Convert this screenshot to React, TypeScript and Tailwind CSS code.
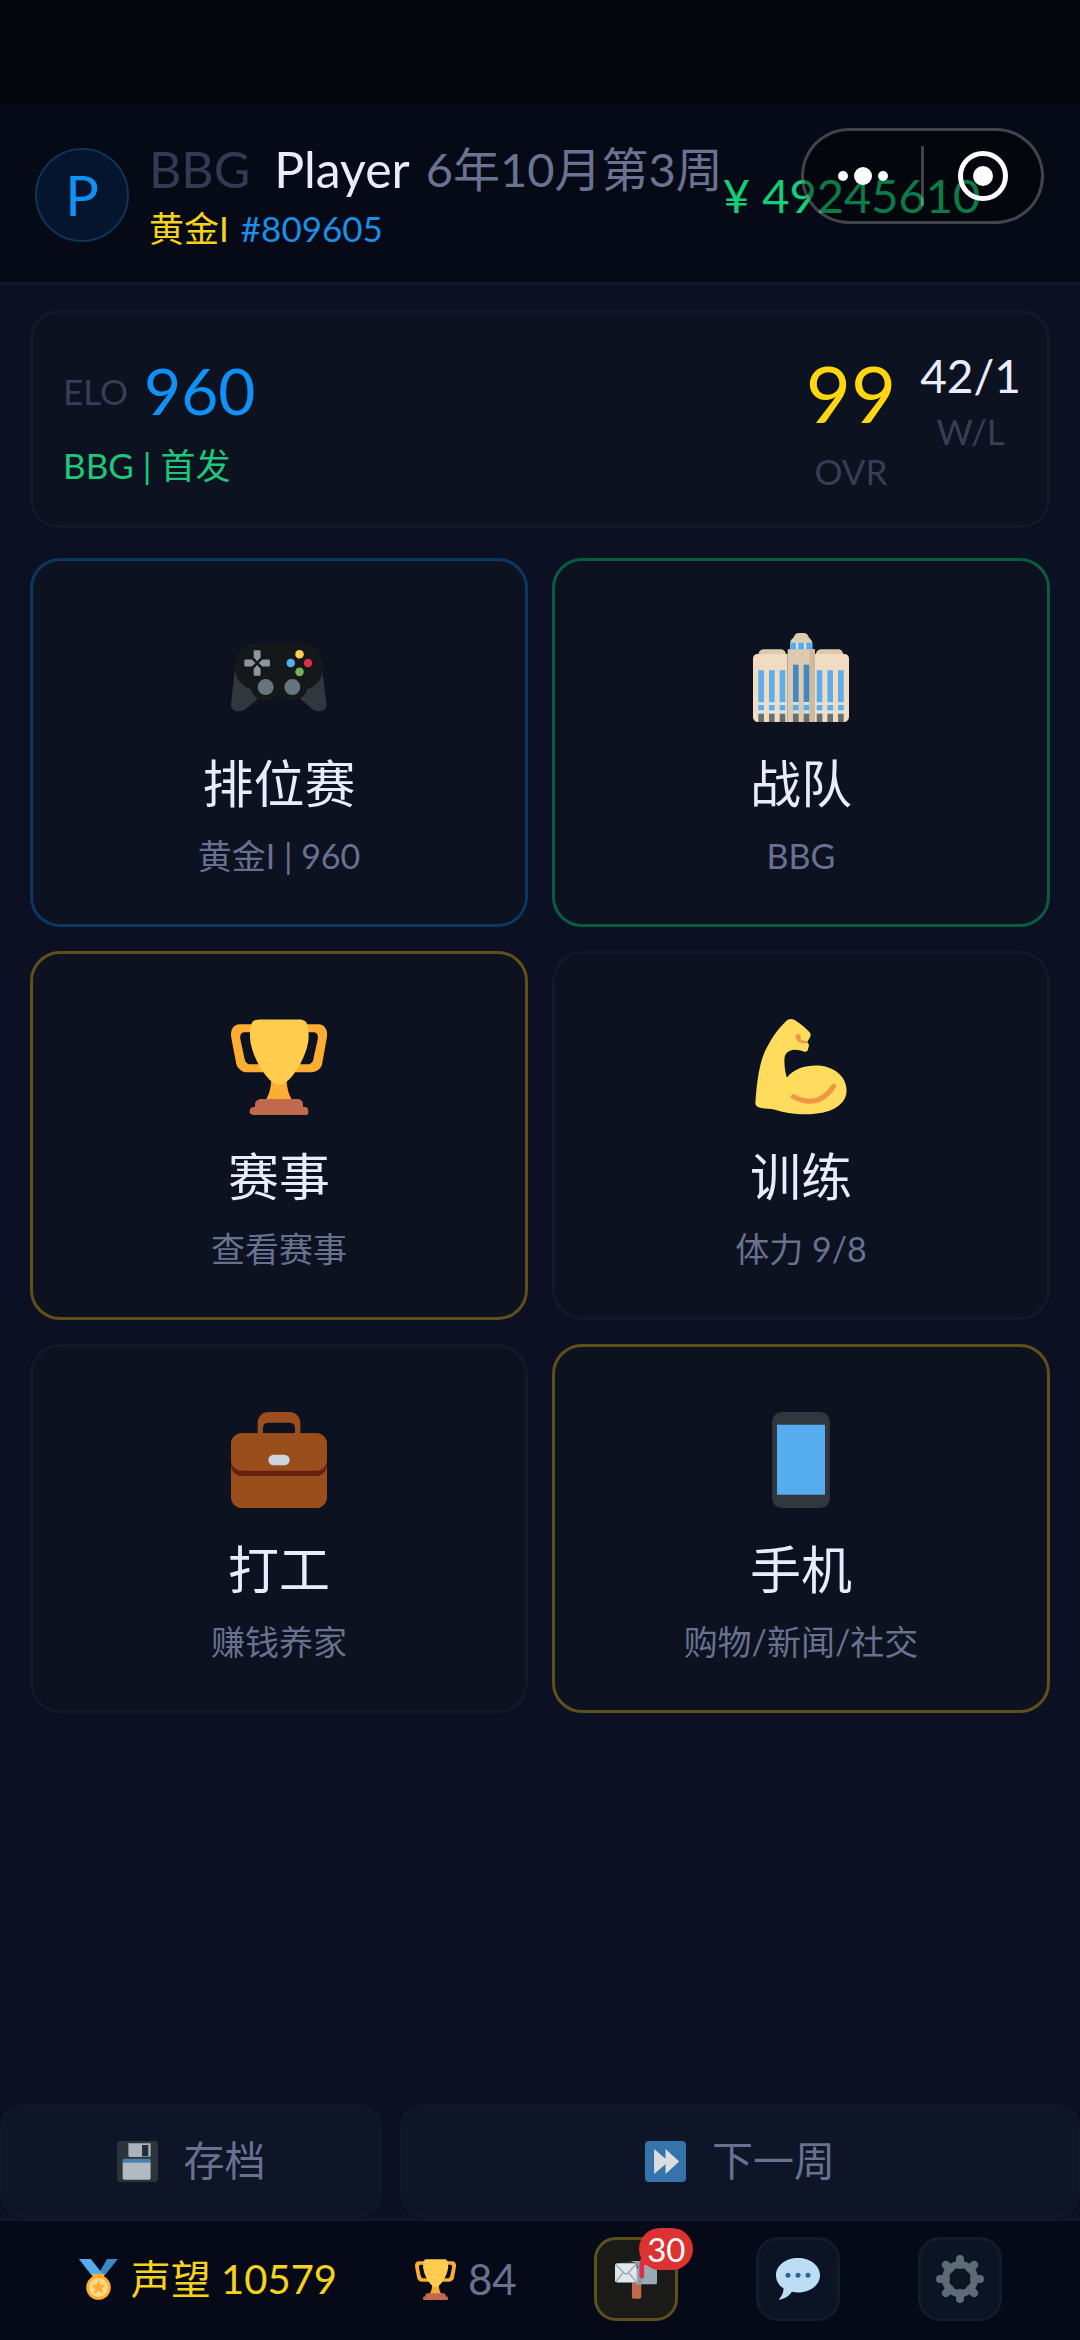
import type { ReactNode } from "react";

const Gamepad = () => (
  <svg viewBox="0 0 36 36" className="w-24 h-24" aria-hidden="true">
    <path
      fill="#31373D"
      d="M1.6 15 0 29.3C-.1 31.2 1.400 32 2.900 32c1 0 1.900-.3 2.600-.9L14 24zM34 15l1.800 14.300c.2 1.900-1.300 2.700-2.700 2.700-1 0-1.900-.3-2.600-.9L22 24z"
    />
    <path
      fill="#141819"
      d="M8.500 6.500h19c4 0 7 4 7 9 0 4.300-2.500 7.200-6 8.200C28 26.300 25.600 28 23 28c-1.800 0-3-.6-4-1.500h-2c-1 .9-2.200 1.500-4 1.500-2.600 0-5-1.700-5.500-4.300-3.500-1-6-3.900-6-8.200 0-5 3-9 7-9z"
    />
    <circle cx="13" cy="22.900" r="3" fill="#66757F" />
    <circle cx="23" cy="22.900" r="3" fill="#66757F" />
    <path
      fill="#8A96A0"
      d="M8.500 9.600c0-.3.200-.5.500-.5h1.600c.3 0 .5.200.5.500v2.200L9.800 13.200 8.500 11.800zM8.500 18.200c0 .3.200.5.500.5h1.600c.3 0 .5-.2.500-.5V16l-1.300-1.400L8.500 16zM5.500 12.600c-.3 0-.5.200-.5.500v1.600c0 .3.200.5.500.5h2.300l1.400-1.300-1.400-1.300zM14.100 12.600c.3 0 .5.200.5.500v1.600c0 .3-.2.500-.5.500h-2.300l-1.400-1.300 1.400-1.300z"
    />
    <circle cx="25.700" cy="10.600" r="1.600" fill="#FFCC4D" />
    <circle cx="22.400" cy="13.900" r="1.600" fill="#55ACEE" />
    <circle cx="28.900" cy="13.900" r="1.600" fill="#DD2E44" />
    <circle cx="25.700" cy="17.200" r="1.600" fill="#77B255" />
  </svg>
);

const sideWindows = [2, 6, 10, 23.9, 27.9, 31.9];
const towerWindows = [15, 19];

const Building = () => (
  <svg viewBox="0 0 36 36" className="w-24 h-24" aria-hidden="true">
    <path fill="#DDC9AC" d="M2 11c0-1.500 1-2.300 2-2.300h6.500c1 0 1.800.8 2 2.300zM23.500 11c0-1.500 1-2.300 2-2.300H32c1 0 1.800.8 2 2.300z" />
    <path
      fill="#EFDCC2"
      d="M0 12.200c0-1 .7-1.700 1.700-1.700H13V36H2c-1.200 0-2-.8-2-2zM36 12.200c0-1-.7-1.700-1.700-1.700H23V36h11c1.200 0 2-.8 2-2z"
    />
    <path fill="#DFCDB3" d="M14 6.300c0-1.300.8-1.400 1.300-2.200.4-1 .9-1.500 1.900-1.500h1.800c1 0 1.500.5 1.900 1.500.4.800 1.300 1 1.300 2.200v2.600H14z" />
    <path fill="#DDCAAF" d="M13 8.700h10.200V36H13z" />
    <path fill="#CDBA9F" d="M21.200 8.700h2V36h-2z" />
    <path fill="#D5E4EC" d="M14 6.300h8.200v2.400H14z" />
    <path fill="#55ACEE" d="M14 6.300h2.100v2.400H14zM17 6.300h2.100v2.400H17zM20 6.300h2.200v2.400H20z" />
    {sideWindows.map((x) => (
      <g key={x}>
        <path fill="#D3E6EF" d={`M${x} 28.500h2.100v4.200H${x}z`} />
        <path fill="#5DADEC" d={`M${x} 16.600h2.100v12H${x}zM${x} 29.600h2.100v2H${x}z`} />
        <path fill="#66706F" d={`M${x} 32.900h2.100V36H${x}z`} />
      </g>
    ))}
    {towerWindows.map((x) => (
      <g key={x}>
        <path fill="#D3E0E4" d={`M${x} 28.500h2.100v4.200H${x}z`} />
        <path fill="#4289C1" d={`M${x} 14.500h2.100v14H${x}z`} />
        <path fill="#55ACEE" d={`M${x} 29.600h2.100v2H${x}z`} />
        <path fill="#66706F" d={`M${x} 32.900h2.100V36H${x}z`} />
      </g>
    ))}
  </svg>
);

const Trophy = ({ className }: { className: string }) => (
  <svg viewBox="0 0 36 36" className={className} aria-hidden="true">
    <path
      fill="#FFAC33"
      d="M5.123 5h6C12.227 5 13 4.896 13 6V4c0-1.104-.773-2-1.877-2h-8c-2 0-3.583 2.125-3 5 0 0 1.791 9.375 1.917 9.958C2.373 18.500 4.164 20 6.081 20h6.958c1.105 0-.039-1.896-.039-3v-2c0 1.104-.773 2-1.877 2h-4c-1.104 0-1.833-1.042-2-2S3.539 7.667 3.539 7.667C3.206 5.750 4.018 5 5.123 5zm25.812 0h-6C23.831 5 22 4.896 22 6V4c0-1.104 1.831-2 2.935-2h8c2 0 3.584 2.125 3 5 0 0-1.633 9.419-1.771 10-.354 1.500-2.042 3-4 3h-7.146C21.914 20 22 18.104 22 17v-2c0 1.104 1.831 2 2.935 2h4c1.104 0 1.834-1.042 2-2s1.584-7.333 1.584-7.333C32.851 5.750 32.040 5 30.935 5zM20.832 22c0-6.958-2.709 0-2.709 0s-3-6.958-3 0-3.291 10-3.291 10h12.292c-.001 0-3.292-3.042-3.292-10z"
    />
    <path
      fill="#FFCC4D"
      d="M29.123 6.577c0 6.775-6.770 18.192-11 18.192-4.231 0-11-11.417-11-18.192 0-5.195 1-6.319 3-6.319 1.374 0 6.025-.027 8-.027l7-.001c2.917-.001 4 .684 4 6.347z"
    />
    <path
      fill="#C1694F"
      d="M27 33c0 1.104.227 2-.877 2h-16C9.018 35 9 34.104 9 33v-1c0-1.104 1.164-2 2.206-2h13.917c1.042 0 1.877.896 1.877 2v1z"
    />
    <path
      fill="#C1694F"
      d="M29 34.625c0 .76.165 1.375-1.252 1.375H8.498C7.206 36 7 35.385 7 34.625v-.25C7 33.615 7.738 33 8.498 33h19.250c.759 0 1.252.615 1.252 1.375v.25z"
    />
  </svg>
);

const Muscle = () => (
  <svg viewBox="0 0 36 36" className="w-24 h-24" aria-hidden="true">
    <path
      fill="#FFDC5D"
      d="M13.700.1c.8-.2 1.700.1 2.600.7 1.900 1.200 3.600 2.700 5 4.300.4.500.4 1.100.1 1.700l-1.100 1.900c.6.400.8.900.6 1.600l-.3 1.200c-.3.700-.9.900-1.600.7-1.500-.5-3-.9-4.500-.5-1.700.4-2.600 1.500-2.700 3.300-.1 2.300.2 4.700.9 6.900 2.700-3.200 6.500-4.500 11-4.500 6.500 0 11.400 4 11.400 9.400 0 5.600-6.200 8.900-15.100 8.900-5 0-8.900-.8-12-1.800-2-.5-4-.1-5.900-.8-.9-.4-1.300-.9-1.200-1.900C1.400 24.500 2.200 16 5.300 10.500 7.200 6.800 9.700 3.300 12.200 1c.5-.5.900-.8 1.500-.9z"
    />
    <path fill="none" stroke="#EF9645" strokeWidth="1.900" strokeLinecap="round" d="M15.200 29.100c6.400 3.500 11.400 1.500 15-3.800" />
    <path
      fill="#EF9645"
      d="M16 6.300c.2-.6.900-.8 1.400-.5.800.5.700 1 .3 1.500.3.700 1.100.8 2 .9l.7.300-.3.500c-1.600.3-3.200-.1-3.700-1.200-.2-.5-.5-.9-.4-1.500z"
    />
  </svg>
);

const Briefcase = () => (
  <svg viewBox="0 0 36 36" className="w-24 h-24" aria-hidden="true">
    <path fill="#9A4E1C" d="M10 9V4c0-2.200 1.800-4 4-4h8c2.200 0 4 1.800 4 4v5h-2V6c0-1.200-.8-2-2-2h-8c-1.200 0-2 .8-2 2v3z" />
    <rect y="8" width="36" height="28" rx="4" fill="#9A4E1C" />
    <path fill="#662113" d="M0 18v2c0 2.200 1.800 4 4 4h28c2.200 0 4-1.800 4-4v-2z" />
    <rect y="8" width="36" height="14" rx="4" fill="#9A4E1C" />
    <rect x="14" y="16" width="8" height="4" rx="2" fill="#CCD6DD" />
  </svg>
);

const Phone = () => (
  <svg viewBox="0 0 36 36" className="w-24 h-24" aria-hidden="true">
    <rect x="7.200" width="21.600" height="36" rx="3.600" fill="#31373D" />
    <path fill="#55ACEE" d="M9 4.800h18v26.200H9z" />
  </svg>
);

const Floppy = () => (
  <svg viewBox="0 0 36 36" className="w-[41px] h-[41px] opacity-90" aria-hidden="true">
    <rect width="36" height="36" rx="3" fill="#31373D" />
    <path fill="#BCC5CD" d="M10 2h19.500v10.500c0 1-.5 1.500-1.500 1.500H11.500c-1 0-1.500-.5-1.500-1.500z" />
    <path fill="#2A3038" d="M22 3.500h5.500v10H22z" />
    <path fill="#4F8CC0" d="M5 17c0-1 .6-1.500 1.500-1.500H28c1 0 1.500.5 1.500 1.500v3H5z" />
    <path fill="#C3CBD4" d="M5 19h24.500v13.500c0 1-.5 1.500-1.500 1.500H6.500c-1 0-1.500-.5-1.500-1.500z" />
  </svg>
);

const FastForward = () => (
  <svg viewBox="0 0 36 36" className="w-[41px] h-[41px]" aria-hidden="true">
    <rect width="36" height="36" rx="3.500" fill="#3474AB" />
    <path fill="#DCDEE2" d="M8 7l10 8.600V7l12 11-12 11v-8.600L8 29z" />
  </svg>
);

const Medal = () => (
  <svg viewBox="0 0 36 36" className="w-[41px] h-[41px]" aria-hidden="true">
    <path fill="#3B88C3" d="M25.500 0H35L23.500 14.500h-6.300z" />
    <path fill="#55ACEE" d="M.8 0h10.400l11 13.500-4.700 2.500h-4.300z" />
    <circle cx="18" cy="25" r="10.800" fill="#FFAC33" />
    <path fill="#FFAC33" d="M13 13h10v4H13z" />
    <circle cx="18" cy="25" r="8.300" fill="#FFD983" />
    <path fill="#FFAC33" d="M18 18.300l1.700 4.400 4.700.3-3.600 3 1.200 4.500-4-2.500-4 2.500 1.200-4.500-3.600-3 4.700-.3z" />
  </svg>
);

const Mailbox = () => (
  <svg viewBox="0 0 36 36" className="w-[42px] h-[42px]" aria-hidden="true">
    <path fill="#C1694F" d="M14.500 21h8v12.500c0 1-1 1.500-2 1.500h-4c-1 0-2-.5-2-1.500z" />
    <path fill="#99AAB5" d="M14 2.500h13c5 0 9 3 9 8v10.500c0 1-.5 1.500-1.500 1.500H18z" />
    <path fill="#292F33" d="M5 5c3-2.500 12-3 14.500 1v3H5z" />
    <path fill="#8899A6" d="M13 2.500c4 0 7 3 7 8V23h3V11c0-5-4-8.500-8-8.500z" />
    <rect y="4.500" width="18.500" height="16.500" rx="2" fill="#E1E8ED" />
    <path fill="none" stroke="#99AAB5" strokeWidth="1.200" d="M.6 5.500l7.400 7.600c.8.800 2 .8 2.800 0L18 5.500M.8 20.300l6-7.400M18 20.300l-6-7.400" />
    <path fill="#DD2E44" d="M21 3.500C21 1.500 23 0 25 0h8v6h-8v9.500c0 2.700-4 2.700-4 0z" />
  </svg>
);

const Bubble = () => (
  <svg viewBox="0 0 44 44" className="w-11 h-11" aria-hidden="true">
    <path
      fill="#BDDDF4"
      d="M22 1c12.200 0 22 7.500 22 17.200S34.200 35.500 22 35.500c-2.200 0-4.300-.2-6.200-.7C13 39.500 8 42 3.500 42.800c-.6 0-.6-.6-.2-1C6 39 7.500 35.500 7.600 31.600 3 28.400 0 23.600 0 18.200 0 8.500 9.800 1 22 1z"
    />
    <circle cx="12" cy="18.200" r="2.500" fill="#2A6797" />
    <circle cx="22" cy="18.200" r="2.500" fill="#2A6797" />
    <circle cx="32" cy="18.200" r="2.500" fill="#2A6797" />
  </svg>
);

const Gear = () => (
  <svg viewBox="0 0 48 48" className="w-12 h-12" aria-hidden="true">
    <g stroke="#5C6B76" strokeWidth="8" strokeLinecap="round">
      <path d="M24 4v6M24 38v6M4 24h6M38 24h6" />
      <path d="M9.900 9.900l4 4M34.100 34.100l4 4M9.900 38.100l4-4M34.100 13.900l4-4" />
    </g>
    <circle cx="24" cy="24" r="14.500" fill="none" stroke="#5C6B76" strokeWidth="7" />
  </svg>
);

type Tile = { title: string; note: string; border: string; icon: ReactNode };

const tiles: Tile[] = [
  { title: "排位赛", note: "黄金I | 960", border: "border-[#0b3761]", icon: <Gamepad /> },
  { title: "战队", note: "BBG", border: "border-[#0a5c40]", icon: <Building /> },
  { title: "赛事", note: "查看赛事", border: "border-[#5f501a]", icon: <Trophy className="w-24 h-24" /> },
  { title: "训练", note: "体力 9/8", border: "border-[#13192d]", icon: <Muscle /> },
  { title: "打工", note: "赚钱养家", border: "border-[#13192d]", icon: <Briefcase /> },
  { title: "手机", note: "购物/新闻/社交", border: "border-[#5f501a]", icon: <Phone /> },
];

const Header = () => (
  <header className="relative flex items-center border-b-[3px] border-[#12182b] bg-[#060a17] pl-[35px] pr-9 pt-[37px] pb-[33px]">
    <div className="flex h-[94px] w-[94px] shrink-0 items-center justify-center rounded-full border-2 border-[#0e3459] bg-[#06152e] text-[56px] leading-none text-[#0f92f7]">
      P
    </div>
    <div className="ml-5 shrink-0">
      <div className="flex items-center whitespace-nowrap text-[50px] leading-[56px]">
        <span className="text-[#343a54]">BBG</span>
        <h1 className="ml-6 text-[#e8ecff]">Player</h1>
        <span className="ml-4 text-[47px] text-[#6a7391]">6年10月第3周</span>
      </div>
      <div className="mt-[10px] flex gap-3 text-[35px] leading-[42px]">
        <span className="text-[#f5d21c]">黄金I</span>
        <span className="text-[#1b8fea]">#809605</span>
      </div>
    </div>
    <span className="whitespace-nowrap text-[47px] leading-[56px] text-[#12cf79]">¥ 49245610</span>
    <div className="absolute right-9 top-6 flex h-24 w-[243px] items-center rounded-full border-[3px] border-white/25 bg-black/40">
      <button type="button" aria-label="更多" className="flex flex-1 items-center justify-center gap-[6px]">
        <i className="h-[10px] w-[10px] rounded-full bg-white" />
        <i className="h-[18px] w-[18px] rounded-full bg-white" />
        <i className="h-[10px] w-[10px] rounded-full bg-white" />
      </button>
      <i className="h-[60px] w-[3px] bg-white/25" />
      <button type="button" aria-label="关闭" className="flex flex-1 justify-center">
        <i className="flex h-[50px] w-[50px] items-center justify-center rounded-full border-[5px] border-white">
          <i className="h-5 w-5 rounded-full bg-white" />
        </i>
      </button>
    </div>
  </header>
);

const Stats = () => (
  <section className="flex items-center rounded-[28px] border-[3px] border-[#13192d] bg-[#0c121f] pl-[30px] pr-[26px] pt-[34px] pb-8">
    <div className="flex-1">
      <div className="flex items-center gap-4">
        <span className="text-[35px] leading-[44px] text-[#383e58]">ELO</span>
        <strong className="text-[64px] font-normal leading-[80px] text-[#0f92f7]">960</strong>
      </div>
      <p className="mt-[10px] text-[35px] leading-[48px] text-[#1fc67c]">BBG | 首发</p>
    </div>
    <div className="text-center">
      <div className="text-[78px] leading-[92px] text-[#ffd60f]">99</div>
      <div className="mt-[10px] text-[35px] leading-[44px] text-[#383e58]">OVR</div>
    </div>
    <div className="ml-6 self-start text-center">
      <div className="text-[46px] leading-[58px] text-[#e8ecff]">42/1</div>
      <div className="mt-1 text-[35px] leading-[44px] text-[#383e58]">W/L</div>
    </div>
  </section>
);

const App = () => {
  return (
    <div className="flex min-h-screen flex-col bg-[#0b1022] font-['Lato','Noto_Sans_CJK_SC',sans-serif]">
      <div className="h-[104px] shrink-0 bg-[#05070f]" />
      <Header />

      <main className="flex-1 px-[30px] pt-[25px]">
        <Stats />
        <div className="mt-[30px] grid grid-cols-2 gap-6">
          {tiles.map((tile) => (
            <button
              key={tile.title}
              type="button"
              className={`flex flex-col items-center rounded-[30px] border-[3px] bg-[#0c1220] pt-[65px] pb-[46px] ${tile.border}`}
            >
              {tile.icon}
              <span className="mt-8 text-[51px] leading-[60px] text-[#e8ecff]">{tile.title}</span>
              <span className="mt-5 text-[34px] leading-[44px] text-[#68718f]">{tile.note}</span>
            </button>
          ))}
        </div>
      </main>

      <div className="flex gap-[18px] text-[41px] leading-[56px] text-[#68718f]">
        <button
          type="button"
          className="flex w-[382px] items-center justify-center gap-[26px] rounded-[24px] border-[3px] border-[#0f1729] bg-[#0d1527] py-[26px]"
        >
          <Floppy />
          存档
        </button>
        <button
          type="button"
          className="flex flex-1 items-center justify-center gap-[26px] rounded-[24px] border-[3px] border-[#0f1729] bg-[#0d1527] py-[26px]"
        >
          <FastForward />
          下一周
        </button>
      </div>

      <footer className="flex items-center justify-evenly border-t-[3px] border-[#12182b] bg-[#060917] pt-4 pb-[19px]">
        <div className="flex items-center gap-3 text-[40px] leading-[56px] text-[#f5d21c]">
          <Medal />
          声望 10579
        </div>
        <div className="flex items-center gap-3 text-[42px] leading-[56px] text-[#68718f]">
          <Trophy className="w-[41px] h-[41px]" />
          84
        </div>
        <button
          type="button"
          aria-label="邮件"
          className="relative flex h-[84px] w-[84px] items-center justify-center rounded-[22px] border-[3px] border-[#5c511b] bg-[#1a1a18]"
        >
          <Mailbox />
          <span className="absolute -right-[18px] -top-3 flex h-[42px] items-center rounded-full bg-[#dc3232] px-2 text-[33px] leading-none text-white">
            30
          </span>
        </button>
        <button
          type="button"
          aria-label="消息"
          className="flex h-[84px] w-[84px] items-center justify-center rounded-[22px] border-[3px] border-[#121a2d] bg-[#0b1425]"
        >
          <Bubble />
        </button>
        <button
          type="button"
          aria-label="设置"
          className="flex h-[84px] w-[84px] items-center justify-center rounded-[22px] border-[3px] border-[#121a2d] bg-[#0b1425]"
        >
          <Gear />
        </button>
      </footer>
    </div>
  );
};

export default App;
